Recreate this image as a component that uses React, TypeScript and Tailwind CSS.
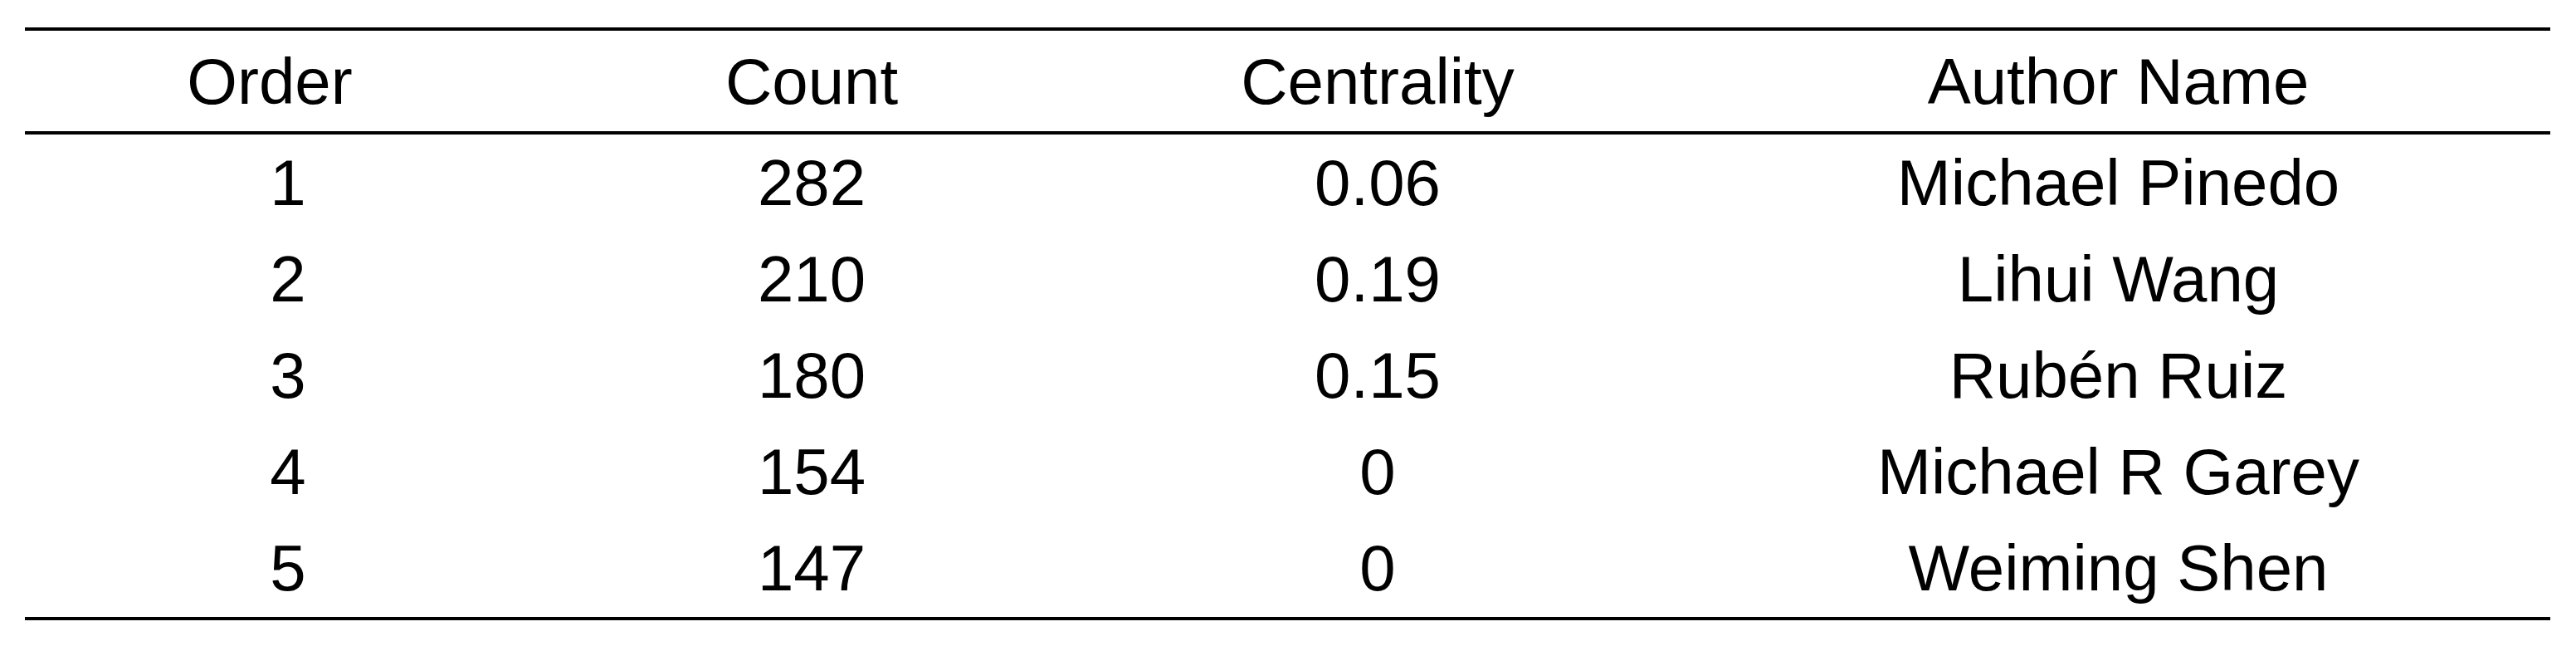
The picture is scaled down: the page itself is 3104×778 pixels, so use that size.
const rows = [
  { order: "1", count: "282", centrality: "0.06", name: "Michael Pinedo" },
  { order: "2", count: "210", centrality: "0.19", name: "Lihui Wang" },
  { order: "3", count: "180", centrality: "0.15", name: "Rubén Ruiz" },
  { order: "4", count: "154", centrality: "0", name: "Michael R Garey" },
  { order: "5", count: "147", centrality: "0", name: "Weiming Shen" },
];

const cols = "grid grid-cols-[590px_716px_648px_1089px]";

export default function App() {
  return (
    <div className="w-[3104px] h-[778px] bg-white pt-[33px] pl-[30px] text-black font-['Liberation_Sans',Arial,sans-serif] text-[78px] leading-none">
      <div className="w-[3043px] border-t-4 border-b-4 border-black">
        <div className={`${cols} h-[125px] items-center border-b-4 border-black text-center`}>
          <div>Order</div>
          <div>Count</div>
          <div>Centrality</div>
          <div className="pl-[48px]">Author Name</div>
        </div>
        <div className="pb-[1px]">
          {rows.map((r) => (
            <div key={r.order} className={`${cols} h-[116px] items-center text-center`}>
              <div className="pl-[44px]">{r.order}</div>
              <div>{r.count}</div>
              <div>{r.centrality}</div>
              <div className="pl-[48px]">{r.name}</div>
            </div>
          ))}
        </div>
      </div>
    </div>
  );
}
